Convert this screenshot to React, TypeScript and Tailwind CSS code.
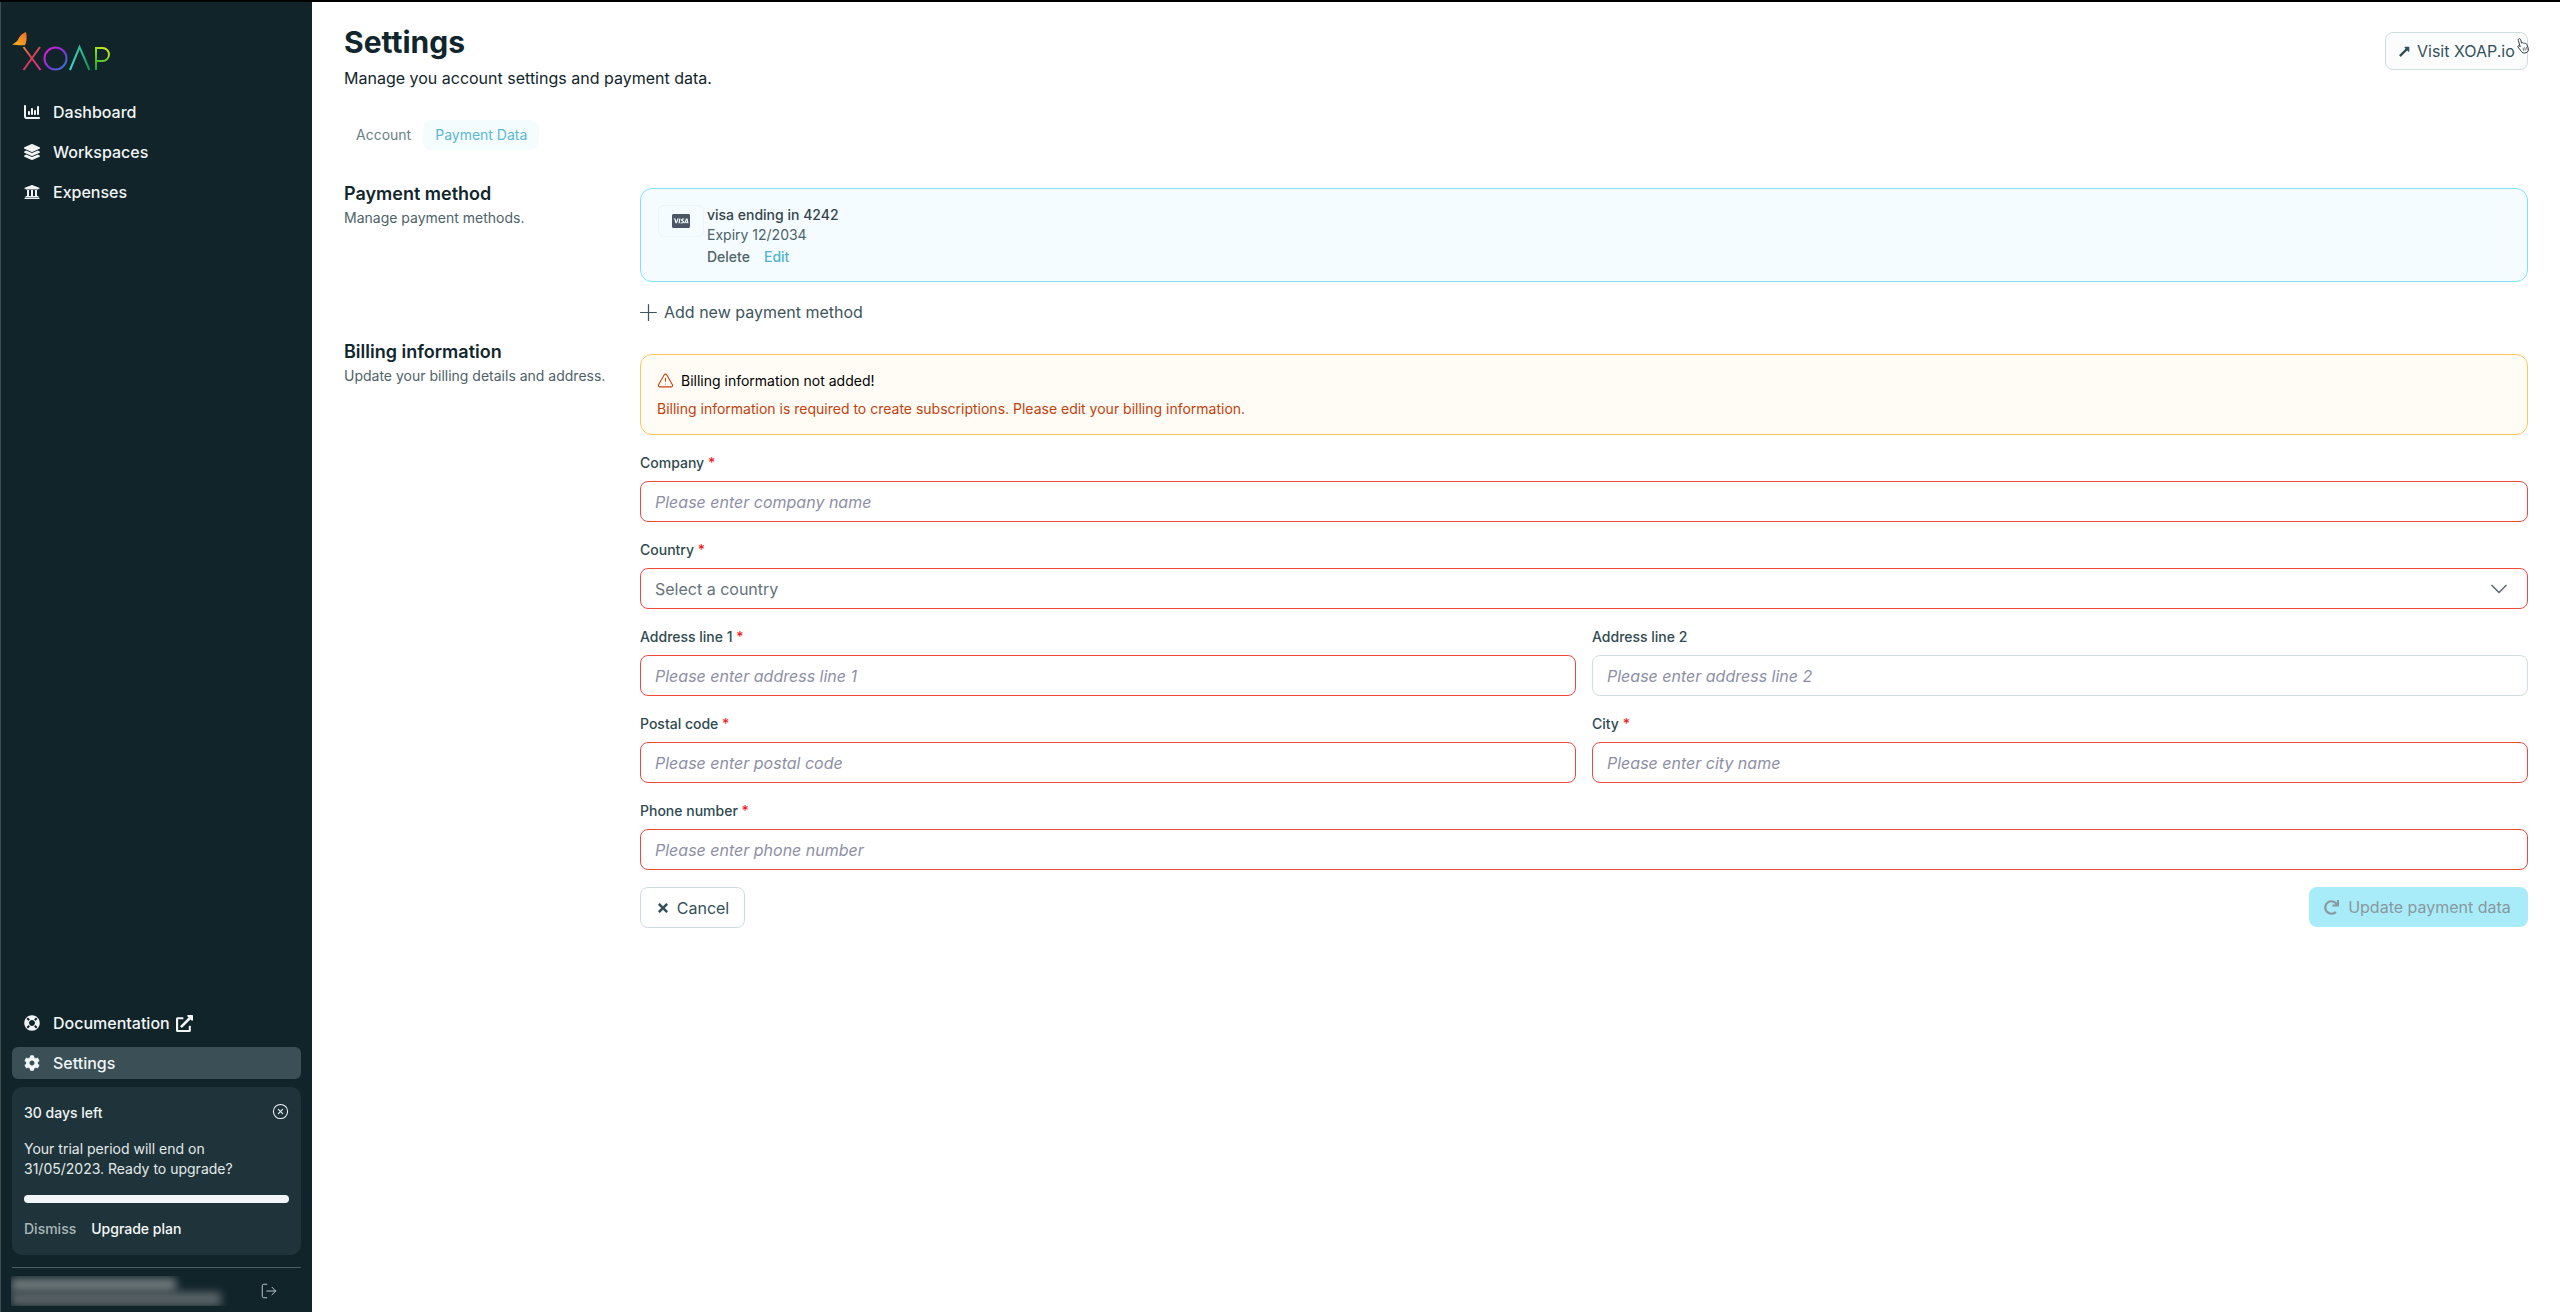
import React from 'react';
import { ChevronDown, CircleX, LogOut, Plus, TriangleAlert } from 'lucide-react';
import { FaCcVisa, FaCog, FaExternalLinkAlt, FaLayerGroup, FaLifeRing, FaLongArrowAltUp, FaRedo, FaTimes, FaUniversity } from 'react-icons/fa';
import { FaChartColumn } from 'react-icons/fa6';

const XoapLogo = () => (
  <svg width="100" height="42" viewBox="0 0 100 42" fill="none" strokeWidth="2">
    <defs>
      <linearGradient id="lx" gradientUnits="userSpaceOnUse" x1="11" y1="17" x2="29" y2="40">
        <stop offset="0" stopColor="#e8843a" />
        <stop offset="0.5" stopColor="#d83a5a" />
        <stop offset="1" stopColor="#e92fa0" />
      </linearGradient>
      <linearGradient id="lo" gradientUnits="userSpaceOnUse" x1="33" y1="18" x2="54" y2="39">
        <stop offset="0" stopColor="#ee18d8" />
        <stop offset="0.55" stopColor="#7a35d8" />
        <stop offset="1" stopColor="#2f7fc8" />
      </linearGradient>
      <linearGradient id="la" gradientUnits="userSpaceOnUse" x1="58" y1="40" x2="78" y2="40">
        <stop offset="0" stopColor="#3fd8c8" />
        <stop offset="0.6" stopColor="#2bb98a" />
        <stop offset="1" stopColor="#0f8f4a" />
      </linearGradient>
      <linearGradient id="lp" gradientUnits="userSpaceOnUse" x1="84" y1="40" x2="98" y2="18">
        <stop offset="0" stopColor="#12a83c" />
        <stop offset="0.6" stopColor="#7fd81c" />
        <stop offset="1" stopColor="#e8f01c" />
      </linearGradient>
      <linearGradient id="lb" x1="1" y1="0" x2="0" y2="1">
        <stop offset="0" stopColor="#f26a2a" />
        <stop offset="1" stopColor="#f5b81c" />
      </linearGradient>
    </defs>
    <path d="M14 2C9 4 7 7 6 10C4 12 2 14 0 14.5C4 15 9 15.5 13 15C15 12 15 6 14 2Z" fill="url(#lb)" />
    <path d="M11.5 17L28.5 40M28 17L11.5 40" stroke="url(#lx)" />
    <circle cx="43.5" cy="28.5" r="11" stroke="url(#lo)" />
    <path d="M58 40L67.5 17L77.5 40" stroke="url(#la)" />
    <path d="M84 40V18H90.5A6.5 6.5 0 0 1 90.5 31H84" stroke="url(#lp)" />
  </svg>
);

const NavItem = ({ icon, label, active, after }: { icon: React.ReactNode; label: string; active?: boolean; after?: React.ReactNode }) => (
  <div className={`flex h-8 items-center rounded-md px-3 text-base font-medium text-[#f1f5f5] ${active ? 'bg-[#3a5056]' : ''}`}>
    <span className="flex w-4 justify-center">{icon}</span>
    <span className="ml-[13px]">{label}</span>
    {after}
  </div>
);

const Field = ({ label, placeholder, required = true, error = true }: { label: string; placeholder: string; required?: boolean; error?: boolean }) => (
  <div className="flex-1">
    <label className="block text-sm leading-5 font-medium text-[#2f4a50]">
      {label} {required && <span className="text-[#f01f1f]">*</span>}
    </label>
    <input
      placeholder={placeholder}
      className={`mt-2 h-[41px] w-full rounded-lg border bg-white px-[14px] text-base placeholder:text-[#8d8fa6] placeholder:italic ${error ? 'border-[#f0483e]' : 'border-[#d0dcdf]'}`}
    />
  </div>
);

export default function App() {
  return (
    <div className="flex h-[1312px] w-[2560px] overflow-hidden border-t-2 border-black bg-white font-['Inter',sans-serif]">
      <aside className="flex w-[312px] flex-col justify-between border-l border-[#3d4d52] bg-[#11242a] px-[11px]">
        <div>
          <div className="mt-[28px]">
            <XoapLogo />
          </div>
          <nav className="mt-[24px] flex flex-col gap-2">
            <NavItem icon={<FaChartColumn size={16} />} label="Dashboard" />
            <NavItem icon={<FaLayerGroup size={16} />} label="Workspaces" />
            <NavItem icon={<FaUniversity size={16} />} label="Expenses" />
          </nav>
        </div>
        <div>
          <div className="flex flex-col gap-2">
            <NavItem
              icon={<FaLifeRing size={16} />}
              label="Documentation"
              after={<FaExternalLinkAlt size={17} className="ml-[6px]" />}
            />
            <NavItem icon={<FaCog size={16} />} label="Settings" active />
          </div>
          <div className="mt-2 rounded-[10px] bg-[#1f343a] px-3 py-4 text-sm">
            <div className="flex items-center justify-between leading-5 font-medium text-[#f1f5f5]">
              <span>30 days left</span>
              <CircleX size={17} strokeWidth={1.5} className="-translate-y-0.5" />
            </div>
            <p className="mt-4 leading-5 text-[#e3eaea]">
              Your trial period will end on
              <br />
              31/05/2023. Ready to upgrade?
            </p>
            <div className="mt-4 h-2 rounded-full bg-[#f1f5f5]" />
            <div className="mt-4 flex gap-[15px] leading-5 font-medium">
              <span className="text-[#a9b8bc]">Dismiss</span>
              <span className="text-[#f6f8f8]">Upgrade plan</span>
            </div>
          </div>
          <div className="mt-3 border-t border-[#4a5e63]" />
          <div className="mt-2 mb-[6px] flex h-[30px] items-center justify-between">
            <div className="-ml-px h-[30px] w-[222px] overflow-hidden">
              <div className="mt-[2px] h-[14px] w-[165px] bg-[#6f787b] blur-[4px]" />
              <div className="h-[14px] w-[210px] bg-[#5b6568] blur-[4px]" />
            </div>
            <LogOut size={18} strokeWidth={1.25} className="mr-[23px] text-[#c4cfd1]" />
          </div>
        </div>
      </aside>

      <main className="flex-1 pr-[32px] pl-[32px] text-[#11262c]">
        <div className="flex items-start justify-between">
          <div className="pt-[22px]">
            <h1 className="text-3xl leading-9 font-bold">Settings</h1>
            <p className="mt-[6px] text-base leading-6">Manage you account settings and payment data.</p>
          </div>
          <div className="relative mt-[30px] flex h-[38px] w-[143px] items-center rounded-lg border border-[#cfdcdf] bg-[#fbfdfd] pl-[11px] text-base text-[#34515a]">
            <FaLongArrowAltUp size={15} className="rotate-45" />
            <span className="ml-[5px]">Visit XOAP.io</span>
            <svg width="14" height="18" viewBox="0 0 16 19" className="absolute top-[4px] -right-[3px]">
              <path
                d="M3 1.5C4 .8 5 1.2 5.3 2.2L6.4 6C7 5.4 8 5.6 8.4 6.3C9 5.8 10 6 10.4 6.9C11 6.5 12 6.8 12.3 7.6L14 12C14.8 14.6 13.6 16.4 11.4 17.2C9 18 7 17.2 6 15.6L2.2 10.6C1.6 9.8 2.8 8.6 3.8 9.4L4.8 10.4L2.6 3C2.4 2.4 2.6 1.8 3 1.5Z"
                fill="white"
                stroke="#27363b"
                strokeWidth="1.1"
              />
              <path d="M8 11.5L8.8 15M10 11L10.8 14.6M12 10.6L12.8 14" stroke="#27363b" strokeWidth="0.8" />
            </svg>
          </div>
        </div>

        <div className="mt-[30px] flex h-[30px] text-sm">
          <div className="flex items-center px-3 text-[#6b8088]">Account</div>
          <div className="flex items-center rounded-lg bg-[#f5fcfe] px-3 text-[#5bb8d0]">Payment Data</div>
        </div>

        <section className="mt-[34px] flex">
          <div className="w-[296px]">
            <h2 className="text-lg leading-5 font-semibold">Payment method</h2>
            <p className="mt-1 text-sm leading-5 text-[#4d6269]">Manage payment methods.</p>
          </div>
          <div className="flex-1 pt-1">
            <div className="flex h-[94px] rounded-xl border border-[#7de3f5] bg-[#f4fcff] pt-4 pl-[17px] text-sm leading-5">
              <div className="flex h-[32px] w-[46px] items-center justify-center rounded-md border border-[#eef5f7]">
                <FaCcVisa size={18} className="text-[#4b5563]" />
              </div>
              <div className="ml-[3px]">
                <div className="font-medium text-[#34444a]">visa ending in 4242</div>
                <div className="text-[#4d6269]">Expiry 12/2034</div>
                <div className="mt-[2px] flex gap-[14px] font-medium">
                  <span className="text-[#4d6269]">Delete</span>
                  <span className="text-[#4fb3cd]">Edit</span>
                </div>
              </div>
            </div>
            <div className="mt-[18px] flex h-6 items-center text-base text-[#3d565d]">
              <Plus size={27} strokeWidth={1.1} className="-mx-[5px]" />
              <span className="ml-[7px]">Add new payment method</span>
            </div>
          </div>
        </section>

        <section className="mt-[18px] flex">
          <div className="w-[296px]">
            <h2 className="text-lg leading-5 font-semibold">Billing information</h2>
            <p className="mt-1 text-sm leading-5 text-[#4d6269]">Update your billing details and address.</p>
          </div>
          <div className="flex-1 pt-3">
            <div className="h-[81px] rounded-xl border border-[#fbc65a] bg-[#fffcf5] pt-4 pl-[16px] text-sm leading-5">
              <div className="flex items-center text-black">
                <TriangleAlert size={17} strokeWidth={1.5} className="-translate-y-px text-[#c2410c]" />
                <span className="ml-[7px]">Billing information not added!</span>
              </div>
              <p className="mt-2 text-[#c2410c]">
                Billing information is required to create subscriptions. Please edit your billing information.
              </p>
            </div>

            <div className="mt-[18px] flex flex-col gap-[18px]">
              <Field label="Company" placeholder="Please enter company name" />
              <div>
                <label className="block text-sm leading-5 font-medium text-[#2f4a50]">
                  Country <span className="text-[#f01f1f]">*</span>
                </label>
                <div className="mt-2 flex h-[41px] items-center justify-between rounded-lg border border-[#f0483e] px-[14px] text-base text-[#64727a]">
                  <span>Select a country</span>
                  <ChevronDown size={28} strokeWidth={1.5} className="text-[#64727a]" />
                </div>
              </div>
              <div className="flex gap-4">
                <Field label="Address line 1" placeholder="Please enter address line 1" />
                <Field label="Address line 2" placeholder="Please enter address line 2" required={false} error={false} />
              </div>
              <div className="flex gap-4">
                <Field label="Postal code" placeholder="Please enter postal code" />
                <Field label="City" placeholder="Please enter city name" />
              </div>
              <Field label="Phone number" placeholder="Please enter phone number" />
              <div className="-mt-px flex items-start justify-between">
                <div className="flex h-[41px] w-[105px] items-center justify-center gap-[7px] rounded-lg border border-[#cfdcdf] text-base text-[#34515a]">
                  <FaTimes size={14} />
                  Cancel
                </div>
                <div className="flex h-[40px] w-[219px] items-center justify-center gap-[9px] rounded-lg bg-[#a9ecf9] pr-[2px] text-base text-[#88989d]">
                  <FaRedo size={15} />
                  Update payment data
                </div>
              </div>
            </div>
          </div>
        </section>
      </main>
    </div>
  );
}
